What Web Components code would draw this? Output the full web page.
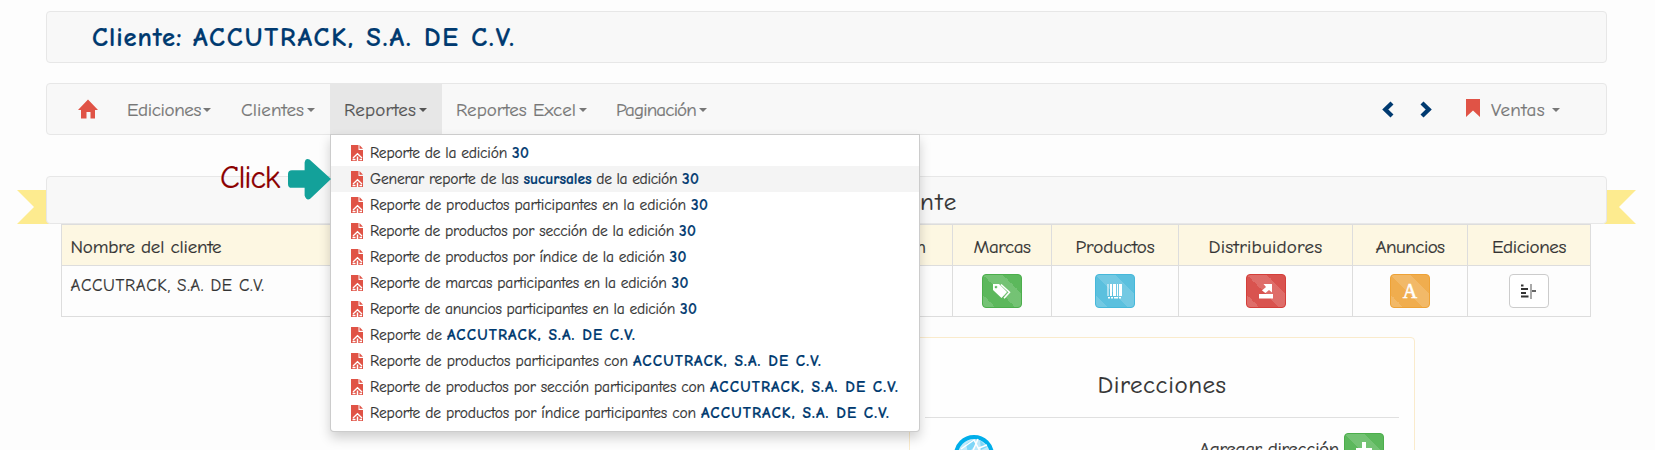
<!DOCTYPE html>
<html lang="es"><head><meta charset="utf-8"><title>Cliente</title>
<style>
body{margin:0;width:1655px;height:450px;overflow:hidden;background:#fdfdfd;font-family:"Comic Neue",Lato,sans-serif;font-size:19px;color:#333;-webkit-text-stroke:.2px}
</style></head><body>
<client-page></client-page>
<script>
class FitText extends HTMLElement{
  connectedCallback(){
    const w=+this.getAttribute('w');
    this.attachShadow({mode:'open'}).innerHTML='<style>:host{display:inline-block;white-space:pre;width:'+w+'px}span{display:inline-block;white-space:pre}</style><span><slot></slot></span>';
    const s=this.shadowRoot.querySelector('span');
    const n=this.textContent.length;
    s.style.letterSpacing=((w-s.getBoundingClientRect().width)/n)+'px';
  }
}

const ICONS={
 home:'<svg width="20" height="20" viewBox="0 0 20 20"><path fill="#e05346" d="M10 .5 20 11h-3v8.500h-4.500V13h-4v6.500H3V11H0z"/></svg>',
 left:'<svg width="12" height="17" viewBox="0 0 12 17"><path fill="none" stroke="#003a70" stroke-width="4.300" d="M10 2 3.300 8.500 10 15"/></svg>',
 right:'<svg width="12" height="17" viewBox="0 0 12 17"><path fill="none" stroke="#003a70" stroke-width="4.300" d="M2 2l6.700 6.500L2 15"/></svg>',
 mark:'<svg width="14" height="18" viewBox="0 0 14 18"><path fill="#e05346" d="M0 0h14v18l-7-6.500L0 18z"/></svg>',
 file:'<svg width="12" height="16" viewBox="0 0 12 16"><path fill="#e05346" d="M0 0h7.500v5H12v11H0z"/><path fill="#e05346" d="M8.500 0 12 3.800H8.500z"/><path fill="none" stroke="#fff" stroke-width="1.300" d="M1.500 14.500h3M8.500 14.500h2.500M2 13l4.500-4.300L11 13"/><path fill="none" stroke="#fff" stroke-width="1.500" d="M6.500 11.500V16"/></svg>',
 tags:'<svg width="18" height="15" viewBox="0 0 18 15"><path fill="#fff" fill-rule="evenodd" d="M0 0h6l8 8-5.500 6L0 6zM3 1.700a1.300 1.300 0 1 0 .01 0z"/><path fill="none" stroke="#fff" stroke-width="1.500" d="M8 .5l8.500 7.700-5.500 6"/></svg>',
 bars:'<svg width="16" height="15" viewBox="0 0 16 15"><path fill="#fff" d="M.5 0h1v12h-1zM3 0h2v12H3zM6 0h3v12H6zM10 0h1v12h-1zM12 0h3v12h-3zM1 13h2v1.500H1zM4 13h2v1.500H4zM7 13h4v1.500H7zM12 13h2v1.500h-2z"/></svg>',
 open:'<svg width="14" height="15" viewBox="0 0 14 15"><path fill="#fff" d="M0 10h14v4.500H0zM4.500 0H13v8.500l-3-2.500-3.500 3L3 6.500 7 3z"/></svg>',
 letter:'<svg width="16" height="18" viewBox="0 0 16 18"><text x="8" y="15.500" text-anchor="middle" font-family="Liberation Serif,serif" font-size="20" fill="#fff" stroke="#fff" stroke-width=".5">A</text></svg>',
 align:'<svg width="16" height="15" viewBox="0 0 16 15"><path fill="#333" d="M0 .5h2.500v2H0zM0 4h7v2H0zM0 8h5v2H0zM0 11.500h7.500v2H0zM11 6.200h4v1.500h-4z"/><path fill="#555" d="M9.500 0h1v15h-1z"/></svg>',
 plus:'<svg width="16" height="16" viewBox="0 0 16 16"><path fill="#fff" d="M6 0h4v6h6v4h-6v6H6v-6H0V6h6z"/></svg>'
};
class UiIcon extends HTMLElement{
  connectedCallback(){this.attachShadow({mode:'open'}).innerHTML='<style>:host{display:inline-block;line-height:0}svg{display:block}</style>'+ICONS[this.getAttribute('name')]}
}

class UiPanel extends HTMLElement{
  connectedCallback(){this.attachShadow({mode:'open'}).innerHTML='<style>:host{display:flex;align-items:center;box-sizing:border-box;border:1px solid #e7e7e7;border-radius:4px;background:#f8f8f8}</style><slot></slot>'}
}

class NavItem extends HTMLElement{
  connectedCallback(){this.attachShadow({mode:'open'}).innerHTML=`<style>
  :host{display:flex;align-items:center;box-sizing:border-box;height:100%;padding:1px 0 0 14px;color:#777;width:${this.getAttribute('width')}px}
  :host([active]){background:#e7e7e7;color:#555}
  i{margin:1px 0 0 ${this.getAttribute('gap')||2}px;border:4px solid transparent;border-top-color:currentColor;border-bottom:0}
  </style><slot></slot><i></i>`}
}

class IconButton extends HTMLElement{
  connectedCallback(){
    const c={green:['#5cb85c','#4cae4c'],blue:['#5bc0de','#46b8da'],red:['#d9534f','#d43f3a'],orange:['#f0ad4e','#eea236'],white:['#fff','#ccc']}[this.getAttribute('tone')];
    this.attachShadow({mode:'open'}).innerHTML=`<style>
    :host{display:inline-flex;align-items:center;justify-content:center;width:40px;height:34px;box-sizing:border-box;border:1px solid ${c[1]};border-radius:4px;
    background:linear-gradient(45deg,rgba(255,255,255,.15) 25%,transparent 25%,transparent 50%,rgba(255,255,255,.15) 50%,rgba(255,255,255,.15) 75%,transparent 75%) 0 0/40px 40px,${c[0]}}
    </style><ui-icon name="${this.getAttribute('icon')}"></ui-icon>`}
}

class ReportMenu extends HTMLElement{
  connectedCallback(){
    const rows=[
     [['Reporte de la edición ',142],['30',17,1]],
     [['Generar reporte de las ',153.5],['sucursales',68,1],[' de la edición ',90.5],['30',17,1]],
     [['Reporte de productos participantes en la edición ',321],['30',17,1]],
     [['Reporte de productos por sección de la edición ',309],['30',17,1]],
     [['Reporte de productos por índice de la edición ',299.5],['30',17,1]],
     [['Reporte de marcas participantes en la edición ',301.5],['30',17,1]],
     [['Reporte de anuncios participantes en la edición ',310],['30',17,1]],
     [['Reporte de ',77],['ACCUTRACK, S.A. DE C.V.',189,1]],
     [['Reporte de productos participantes con ',263],['ACCUTRACK, S.A. DE C.V.',189,1]],
     [['Reporte de productos por sección participantes con ',340],['ACCUTRACK, S.A. DE C.V.',189,1]],
     [['Reporte de productos por índice participantes con ',331],['ACCUTRACK, S.A. DE C.V.',189,1]]];
    this.attachShadow({mode:'open'}).innerHTML=`<style>
    :host{display:block;box-sizing:border-box;width:590px;height:298px;padding:5px 0;background:#fff;border:1px solid rgba(0,0,0,.2);border-radius:0 0 4px 4px;box-shadow:0 6px 12px rgba(0,0,0,.18);font-size:15.5px}
    div{display:flex;align-items:center;height:26px;padding-left:20px;line-height:26px}
    div:nth-of-type(2){background:#f4f4f4}
    ui-icon{margin:-1px 7px 0 0}
    .b{font-weight:bold;color:#003a70}
    </style>`+rows.map(r=>'<div><ui-icon name="file"></ui-icon>'+r.map(s=>`<fit-text w="${s[1]}"${s[2]?' class="b"':''}>${s[0]}</fit-text>`).join('')+'</div>').join('');
  }
}

class ClientTable extends HTMLElement{
  connectedCallback(){this.attachShadow({mode:'open'}).innerHTML=`<style>
   :host{display:block;width:1530px;margin-left:61px}
   .r{display:grid;grid-template-columns:700px 191px 99px 127px 174px 115px 123px;border-left:1px solid #ddd}
   .r>*{box-sizing:border-box;border-right:1px solid #ddd;border-bottom:1px solid #ddd;display:flex;align-items:center;justify-content:center}
   .r>:first-child{justify-content:flex-start;padding-left:8.5px}
   .h>*{height:42px;background:#fdf7e2;border-top:1px solid #ddd;padding-top:3px}
   .d>*{height:51px}
   .d>:first-child{font-size:17px;align-items:flex-start;padding-top:10px}
   .h>:nth-child(2){justify-content:flex-end;padding-right:26px}
  </style>
  <div class="r h"><span><fit-text w="151">Nombre del cliente</fit-text></span><span>Dirección</span><span><fit-text w="57">Marcas</fit-text></span><span><fit-text w="79">Productos</fit-text></span><span><fit-text w="114">Distribuidores</fit-text></span><span><fit-text w="69">Anuncios</fit-text></span><span><fit-text w="74">Ediciones</fit-text></span></div>
  <div class="r d"><span><fit-text w="194">ACCUTRACK, S.A. DE C.V.</fit-text></span><span></span><span><icon-button tone="green" icon="tags"></icon-button></span><span><icon-button tone="blue" icon="bars"></icon-button></span><span><icon-button tone="red" icon="open"></icon-button></span><span><icon-button tone="orange" icon="letter"></icon-button></span><span><icon-button tone="white" icon="align"></icon-button></span></div>`}
}

class AddressCard extends HTMLElement{
  connectedCallback(){this.attachShadow({mode:'open'}).innerHTML=`<style>
   :host{display:block;box-sizing:border-box;width:506px;height:150px;margin:20px 0 0 909px;border:1px solid #faebcc;border-radius:4px;background:#fefefe;padding:0 15px}
   h3{margin:0;height:80px;box-sizing:border-box;padding-top:32px;border-bottom:1px solid #e0e0e0;text-align:center;font-weight:normal;font-size:25px;line-height:30px}
   .row{display:flex;align-items:flex-start;padding:15px 15px 0 29px}
   svg{display:block;margin-top:2px}
   .l{margin-left:auto;margin-right:5px;line-height:32px}
  </style><h3><fit-text w="129">Direcciones</fit-text></h3>
  <div class="row"><svg width="40" height="40" viewBox="0 0 40 40"><circle cx="20" cy="20" r="18" fill="#bfeafb" stroke="#00aeea" stroke-width="4"/><path d="M12 9l8-5 2 6-8 8zM26 5l7 7-6 3z" fill="#7fd6f7"/><path d="M7 14 20 5l8 15M24 4l-6 14M25 13l8-3" stroke="#fff" stroke-width="1.500" fill="none"/></svg>
  <span class="l"><fit-text w="140">Agregar dirección</fit-text></span><icon-button tone="green" icon="plus"></icon-button></div>`}
}

class ClientPage extends HTMLElement{
  connectedCallback(){this.attachShadow({mode:'open'}).innerHTML=`<style>
   :host{display:block;position:relative;padding-top:11px;height:439px;overflow:hidden}
   ui-panel{margin:0 48px 0 46px}
   .head{height:52px;padding-left:45px;font-size:26.5px;font-weight:bold;color:#003a70}
   .nav{height:52px;margin-top:20px}
   .nav .home{margin:0 15px 0 31px}
   .right{margin-left:auto;display:flex;align-items:center;padding-right:45px}
   .title{height:48px;margin-top:41px;font-size:25px;position:relative;justify-content:flex-end;padding:2px 648px 0 0}
   .rib{position:absolute;top:190px;width:32px;height:34px;background:#fdeb8f}
   .rl{left:17px;clip-path:polygon(0 0,100% 0,100% 100%,0 100%,17px 50%)}
   .rr{left:1604px;clip-path:polygon(0 0,100% 0,15px 50%,100% 100%,0 100%)}
   report-menu{position:absolute;left:330px;top:134px}
   .click{position:absolute;left:220px;top:158px;height:42px;display:flex;align-items:center;gap:9px;color:#8b0000;font-size:32px}
   .click fit-text{margin-top:-3px}
   .click svg{display:block}
  </style>
  <div class="rib rl"></div><div class="rib rr"></div>
  <ui-panel class="head"><fit-text w="101">Cliente: </fit-text><fit-text w="323">ACCUTRACK, S.A. DE C.V.</fit-text></ui-panel>
  <ui-panel class="nav"><ui-icon class="home" name="home"></ui-icon>
   <nav-item width="114"><fit-text w="74">Ediciones</fit-text></nav-item><nav-item width="103" gap="3"><fit-text w="63">Clientes</fit-text></nav-item><nav-item width="112" gap="3" active><fit-text w="72">Reportes</fit-text></nav-item><nav-item width="160" gap="3"><fit-text w="120">Reportes Excel</fit-text></nav-item><nav-item width="120" gap="3"><fit-text w="80">Paginación</fit-text></nav-item>
   <div class="right"><ui-icon name="left" style="margin-right:26px"></ui-icon><ui-icon name="right" style="margin-right:34px"></ui-icon><ui-icon name="mark" style="margin:-2px -3px 0 0"></ui-icon><nav-item width="84" gap="7"><fit-text w="54">Ventas</fit-text></nav-item></div>
  </ui-panel>
  <ui-panel class="title"><fit-text w="154">Datos del clie</fit-text><fit-text w="38">nte</fit-text></ui-panel>
  <client-table></client-table>
  <address-card></address-card>
  <report-menu></report-menu>
  <div class="click"><fit-text w="59">Click</fit-text><svg width="43" height="42" viewBox="0 0 44 42"><path fill="#13a19a" d="M4 12h13V4q1-5 5-3l22 20-21 20q-4 3-6-3v-8H4q-4 0-4-4V16q0-4 4-4z"/></svg></div>`}
}
customElements.define('fit-text',FitText);
customElements.define('ui-icon',UiIcon);
customElements.define('ui-panel',UiPanel);
customElements.define('nav-item',NavItem);
customElements.define('icon-button',IconButton);
customElements.define('report-menu',ReportMenu);
customElements.define('client-table',ClientTable);
customElements.define('address-card',AddressCard);
customElements.define('client-page',ClientPage);
</script></body></html>
